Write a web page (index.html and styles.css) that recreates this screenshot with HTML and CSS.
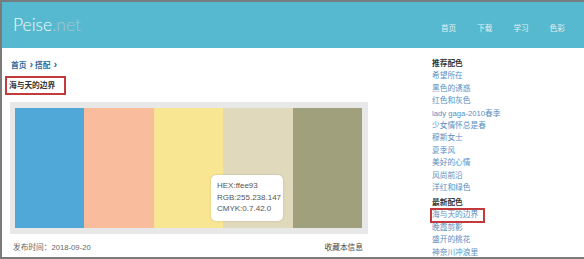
FILE: index.html
```html
<!DOCTYPE html>
<html lang="zh-CN">
<head>
    <meta charset="UTF-8">
    <title>海与天的边界 - Peise.net</title>
    <link rel="stylesheet" href="styles.css">
</head>
<body>
<div class="frame">
    <div class="header">
        <div class="logo">Peise<span class="net">.net</span></div>
        <div class="nav">
            <a href="#">首页</a>
            <a href="#">下载</a>
            <a href="#">学习</a>
            <a href="#">色彩</a>
            <a href="#">关于</a>
        </div>
    </div>
    <div class="content">
        <div class="main">
            <div class="crumbs"><a href="#">首页</a><span class="sep">›</span><a href="#">搭配</a><span class="sep">›</span></div>
            <div class="title"><span class="mark">海与天的边界</span></div>
            <div class="palette">
                <div class="swatches">
                    <div class="swatch" style="background:#4fa8d8"></div>
                    <div class="swatch" style="background:#f9bd9d"></div>
                    <div class="swatch" style="background:#f8e693"></div>
                    <div class="swatch" style="background:#e0d9bb"></div>
                    <div class="swatch" style="background:#a0a07c"></div>
                </div>
                <div class="tip">
                    <div>HEX:ffee93</div>
                    <div>RGB:255.238.147</div>
                    <div>CMYK:0.7.42.0</div>
                </div>
            </div>
            <div class="info">
                <span>发布时间：2018-09-20</span>
                <a href="#">收藏本信息</a>
            </div>
        </div>
        <div class="side">
            <h3>推荐配色</h3>
            <ul>
                <li><a href="#">希望所在</a></li>
                <li><a href="#">黑色的诱惑</a></li>
                <li><a href="#">红色和灰色</a></li>
                <li><a href="#">lady gaga-2010春季</a></li>
                <li><a href="#">少女情怀总是春</a></li>
                <li><a href="#">穆斯女士</a></li>
                <li><a href="#">夏季风</a></li>
                <li><a href="#">美好的心情</a></li>
                <li><a href="#">风尚前沿</a></li>
                <li><a href="#">洋红和绿色</a></li>
            </ul>
            <h3 class="second">最新配色</h3>
            <ul>
                <li><a href="#" class="current">海与天的边界</a></li>
                <li><a href="#">晚霞剪影</a></li>
                <li><a href="#">盛开的桃花</a></li>
                <li><a href="#">神奈川冲浪里</a></li>
            </ul>
        </div>
    </div>
</div>
</body>
</html>
```

FILE: styles.css
```css
body {
    margin: 0;
    font-family: "Liberation Sans", "Noto Sans CJK SC", sans-serif;
    font-size: 7.7px;
    color: #333;
    background: #fff;
}
a {
    text-decoration: none;
}
.frame {
    height: 259px;
    box-sizing: border-box;
    border-top: 2px solid #737c80;
    border-left: 2px solid #7a7a7a;
    border-bottom: 2px solid #7a7a7a;
    overflow: hidden;
}
.header {
    height: 46px;
    background: #56b9cf;
    display: flex;
    align-items: center;
    padding-left: 11px;
    white-space: nowrap;
    overflow: hidden;
}
.logo {
    width: 428px;
    flex: none;
    font-family: Lato, "Open Sans", sans-serif;
    font-weight: 300;
    font-size: 17.5px;
    color: #f2f9fb;
    padding-bottom: 2px;
}
.net {
    color: #a6c7ce;
}
.nav {
    display: flex;
    gap: 21px;
    flex: none;
    padding-top: 4px;
}
.nav a {
    color: #e4f1f4;
    font-size: 7.6px;
}
.content {
    display: flex;
}
.main {
    width: 358px;
    margin-left: 8px;
    position: relative;
}
.crumbs {
    margin-top: 10px;
    line-height: 12px;
    font-weight: bold;
    color: #2c6aa0;
    padding-left: 1px;
}
.crumbs a {
    color: #2c6aa0;
}
.sep {
    font-size: 11px;
    margin: 0 2px 0 3px;
}
.title {
    margin-top: 4px;
    margin-left: -5px;
}
.mark {
    display: inline-block;
    border: 2px solid #c23a3c;
    padding: 1px 9px 0 2px;
    line-height: 14px;
    font-weight: bold;
    color: #333;
}
.palette {
    margin-top: 7px;
    background: #e8e8e8;
    padding: 6px 6px 6px 5px;
    position: relative;
}
.swatches {
    display: flex;
    height: 120px;
}
.swatch {
    flex: 1;
}
.tip {
    position: absolute;
    left: 201px;
    top: 73px;
    width: 72px;
    height: 46px;
    box-sizing: border-box;
    background: #fff;
    border-radius: 5px;
    box-shadow: 0 0 2px rgba(0, 0, 0, 0.2);
    padding: 5px 0 0 6px;
    line-height: 11.6px;
    font-size: 8px;
    color: #555;
}
.info {
    display: flex;
    justify-content: space-between;
    padding: 8px 5px 3px 3px;
    line-height: 12px;
    color: #666;
    border-bottom: 1px dashed #ddd;
}
.info a {
    color: #444;
}
.side {
    margin-left: 64px;
    padding-top: 10px;
}
.side h3 {
    margin: 0;
    font-size: 7.7px;
    line-height: 12.4px;
    color: #333;
}
.side h3.second {
    margin-top: 2.6px;
}
.side ul {
    list-style: none;
    margin: 0;
    padding: 0;
}
.side li {
    line-height: 12.4px;
}
.side a {
    color: #5a8fbf;
}
.side a.current {
    display: inline-block;
    padding: 0 6px 0 1px;
    margin-left: -1px;
    outline: 2px solid #c23a3c;
    outline-offset: -1px;
}
```
